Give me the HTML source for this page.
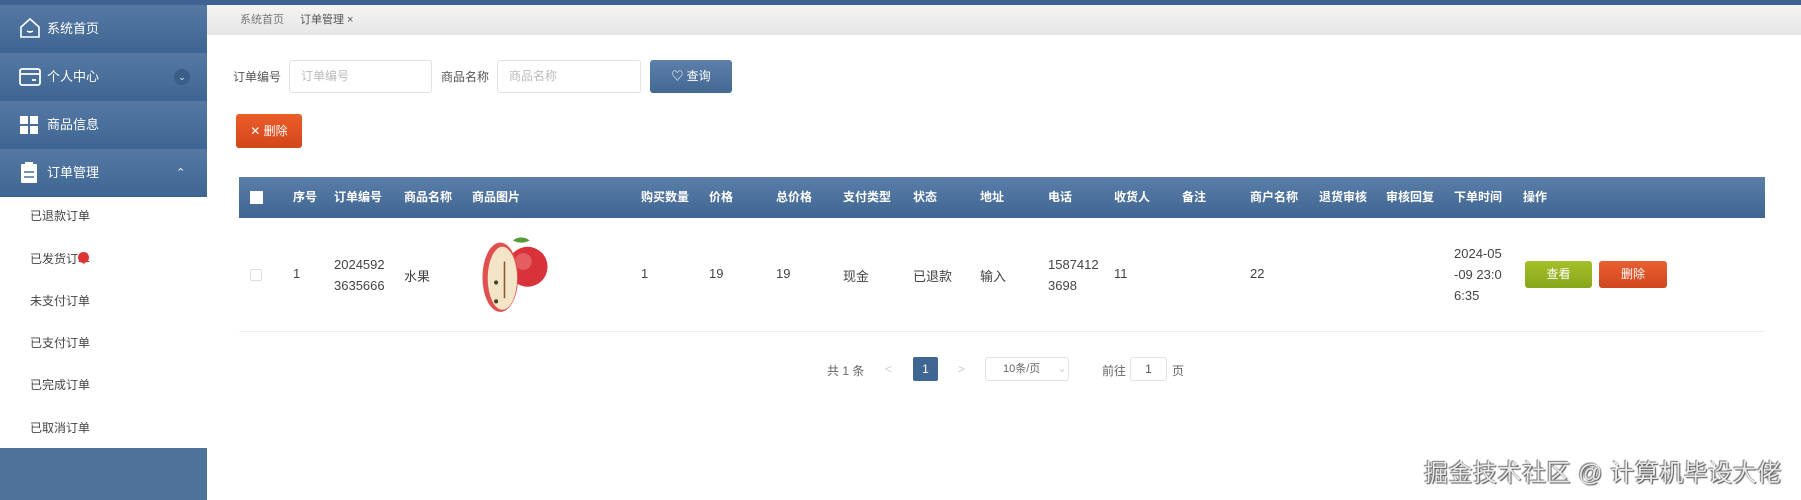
<!DOCTYPE html>
<html><head><meta charset="utf-8"><style>
*{margin:0;padding:0;box-sizing:border-box}
body{width:1801px;height:500px;position:relative;overflow:hidden;background:#fff;font-family:"Liberation Sans","Noto Sans CJK SC",sans-serif;font-size:12px;color:#333}
.abs{position:absolute}
.top{left:0;top:0;width:1801px;height:5px;background:#3f6390}
.side{left:0;top:5px;width:207px;height:190px}
.mi{position:absolute;left:0;width:207px;height:48px;background:linear-gradient(#5579a3,#3e6592);color:#fff;font-size:13px;line-height:48px;padding-left:47px}
.sub{position:absolute;left:30px;font-size:12px;color:#444}
.crumb{left:207px;top:5px;width:1594px;height:30px;background:linear-gradient(#f4f4f4,#e6e6e6);font-size:11px;color:#777;line-height:30px}
.inp{border:1px solid #e3e3e3;border-radius:3px;height:33px;color:#bbb;font-size:12px;line-height:31px;padding-left:11px}
.th{position:absolute;top:0;line-height:41px;color:#fff;font-weight:bold;font-size:12px}
.td{position:absolute;font-size:13px;color:#444}
.btn{color:#fff;text-align:center;border-radius:3px;font-size:12px}
</style></head><body>
<div class="abs top"></div>
<div class="abs side">
 <div class="mi" style="top:0">系统首页
  <svg class="abs" style="left:18px;top:11px" width="24" height="24" viewBox="0 0 24 24" fill="none" stroke="#fff" stroke-width="1.6"><path d="M3 11 12 3l9 8v10H3z"/><path d="M9 15q3 2 6 0"/></svg></div>
 <div class="mi" style="top:48px">个人中心
  <svg class="abs" style="left:18px;top:14px" width="24" height="20" viewBox="0 0 24 20" fill="none" stroke="#fff" stroke-width="1.8"><rect x="2" y="2" width="20" height="16" rx="2"/><path d="M2 7h20M14 13h4"/></svg>
  <span class="abs" style="left:174px;top:16px;width:16px;height:16px;border-radius:8px;background:#3b5e88;color:#cfe;font-size:9px;line-height:16px;text-align:center;padding:0">⌄</span></div>
 <div class="mi" style="top:96px">商品信息
  <svg class="abs" style="left:20px;top:15px" width="18" height="18"><rect x="0" y="0" width="8" height="8" fill="#fff"/><rect x="10" y="0" width="8" height="8" fill="#fff"/><rect x="0" y="10" width="8" height="8" fill="#fff"/><rect x="10" y="10" width="8" height="8" fill="#fff"/></svg></div>
 <div class="mi" style="top:144px">订单管理
  <svg class="abs" style="left:21px;top:13px" width="16" height="21"><rect x="0" y="2" width="16" height="19" rx="1" fill="#fff"/><rect x="4" y="0" width="8" height="4" fill="#fff"/><path d="M3 10h10M3 15h10" stroke="#4a6e9a" stroke-width="1.5"/></svg>
  <span class="abs" style="left:176px;top:0;font-size:11px">⌃</span></div>
</div>
<div class="sub abs" style="top:207px">已退款订单</div>
<div class="sub abs" style="top:250px">已发货订单</div>
<div class="abs" style="left:78px;top:252px;width:11px;height:11px;border-radius:6px;background:#d33"></div>
<div class="sub abs" style="top:292px">未支付订单</div>
<div class="sub abs" style="top:334px">已支付订单</div>
<div class="sub abs" style="top:376px">已完成订单</div>
<div class="sub abs" style="top:419px">已取消订单</div>
<div class="abs" style="left:0;top:448px;width:207px;height:52px;background:#4f729b"></div>
<div class="abs crumb"><span style="margin-left:33px">系统首页</span><span style="margin-left:16px;color:#555">订单管理 ×</span></div>
<div class="abs" style="left:233px;top:68px;font-size:12px;color:#555">订单编号</div>
<div class="abs inp" style="left:289px;top:60px;width:143px">订单编号</div>
<div class="abs" style="left:441px;top:68px;font-size:12px;color:#555">商品名称</div>
<div class="abs inp" style="left:497px;top:60px;width:144px">商品名称</div>
<div class="abs btn" style="left:650px;top:60px;width:82px;height:33px;line-height:33px;background:linear-gradient(#5d80ab,#436892)">♡ 查询</div>
<div class="abs btn" style="left:236px;top:114px;width:66px;height:34px;line-height:34px;background:linear-gradient(#ec5d2a,#d2461b)">✕ 删除</div>
<div class="abs" style="left:239px;top:177px;width:1526px;height:41px;background:linear-gradient(#5a7ea8,#3f6592)">
 <div class="abs" style="left:11px;top:14px;width:13px;height:13px;background:#fff"></div>
 <div class="th" style="left:54px">序号</div><div class="th" style="left:95px">订单编号</div><div class="th" style="left:165px">商品名称</div><div class="th" style="left:233px">商品图片</div><div class="th" style="left:402px">购买数量</div><div class="th" style="left:470px">价格</div><div class="th" style="left:537px">总价格</div><div class="th" style="left:604px">支付类型</div><div class="th" style="left:674px">状态</div><div class="th" style="left:741px">地址</div><div class="th" style="left:809px">电话</div><div class="th" style="left:875px">收货人</div><div class="th" style="left:943px">备注</div><div class="th" style="left:1011px">商户名称</div><div class="th" style="left:1080px">退货审核</div><div class="th" style="left:1147px">审核回复</div><div class="th" style="left:1215px">下单时间</div><div class="th" style="left:1284px">操作</div>
</div>
<div class="abs" style="left:239px;top:331px;width:1526px;height:1px;background:#eee"></div>
<div class="abs" style="left:250px;top:269px;width:12px;height:12px;border:1px solid #ddd;border-radius:2px"></div>
<div class="td" style="left:293px;top:266px">1</div>
<div class="td" style="left:334px;top:254px;line-height:21px">2024592<br>3635666</div>
<div class="td" style="left:404px;top:266px">水果</div>
<svg class="abs" style="left:472px;top:230px" width="86" height="84" viewBox="0 0 64 80"><circle cx="44" cy="35" r="19" fill="#d8333a"/><circle cx="40" cy="30" r="8" fill="#ec7a7a" opacity=".6"/><path d="M30 10q8-6 16 0q-8 4-16 0" fill="#5a9a3a"/><ellipse cx="18" cy="45" rx="17" ry="33" fill="#e05050"/><ellipse cx="20" cy="46" rx="14" ry="30" fill="#f4e5c8"/><path d="M22 30v35" stroke="#8a5a30" stroke-width="1.5"/><circle cx="14" cy="50" r="2" fill="#442"/><circle cx="14" cy="68" r="2" fill="#442"/></svg>
<div class="td" style="left:641px;top:266px">1</div>
<div class="td" style="left:709px;top:266px">19</div>
<div class="td" style="left:776px;top:266px">19</div>
<div class="td" style="left:843px;top:266px">现金</div>
<div class="td" style="left:913px;top:266px">已退款</div>
<div class="td" style="left:980px;top:266px">输入</div>
<div class="td" style="left:1048px;top:254px;line-height:21px">1587412<br>3698</div>
<div class="td" style="left:1114px;top:266px">11</div>
<div class="td" style="left:1250px;top:266px">22</div>
<div class="td" style="left:1454px;top:243px;line-height:21px">2024-05<br>-09 23:0<br>6:35</div>
<div class="abs btn" style="left:1525px;top:261px;width:67px;height:27px;line-height:27px;background:linear-gradient(#a4c12a,#88a619)">查看</div>
<div class="abs btn" style="left:1599px;top:261px;width:68px;height:27px;line-height:27px;background:linear-gradient(#ea5f30,#d0461e)">删除</div>
<div class="abs" style="left:827px;top:362px;font-size:12px;color:#666">共 1 条</div>
<div class="abs" style="left:885px;top:362px;color:#ccc">&lt;</div>
<div class="abs btn" style="left:913px;top:357px;width:25px;height:24px;line-height:24px;background:#3f6592;border-radius:2px">1</div>
<div class="abs" style="left:958px;top:362px;color:#ccc">&gt;</div>
<div class="abs" style="left:985px;top:357px;width:84px;height:24px;border:1px solid #e3e3e3;border-radius:3px;color:#666;font-size:11px;line-height:22px;padding-left:17px">10条/页 <span style="color:#ccc;margin-left:14px">⌄</span></div>
<div class="abs" style="left:1102px;top:362px;color:#666">前往</div>
<div class="abs" style="left:1130px;top:357px;width:37px;height:24px;border:1px solid #e3e3e3;border-radius:3px;text-align:center;line-height:22px;color:#555">1</div>
<div class="abs" style="left:1172px;top:362px;color:#666">页</div>
<div class="abs" style="left:1424px;top:453px;font-size:24px;letter-spacing:0.5px;color:#e8e8e8;text-shadow:1px 1px 1px #555,-1px -1px 1px #777">掘金技术社区 @ 计算机毕设大佬</div>
</body></html>
